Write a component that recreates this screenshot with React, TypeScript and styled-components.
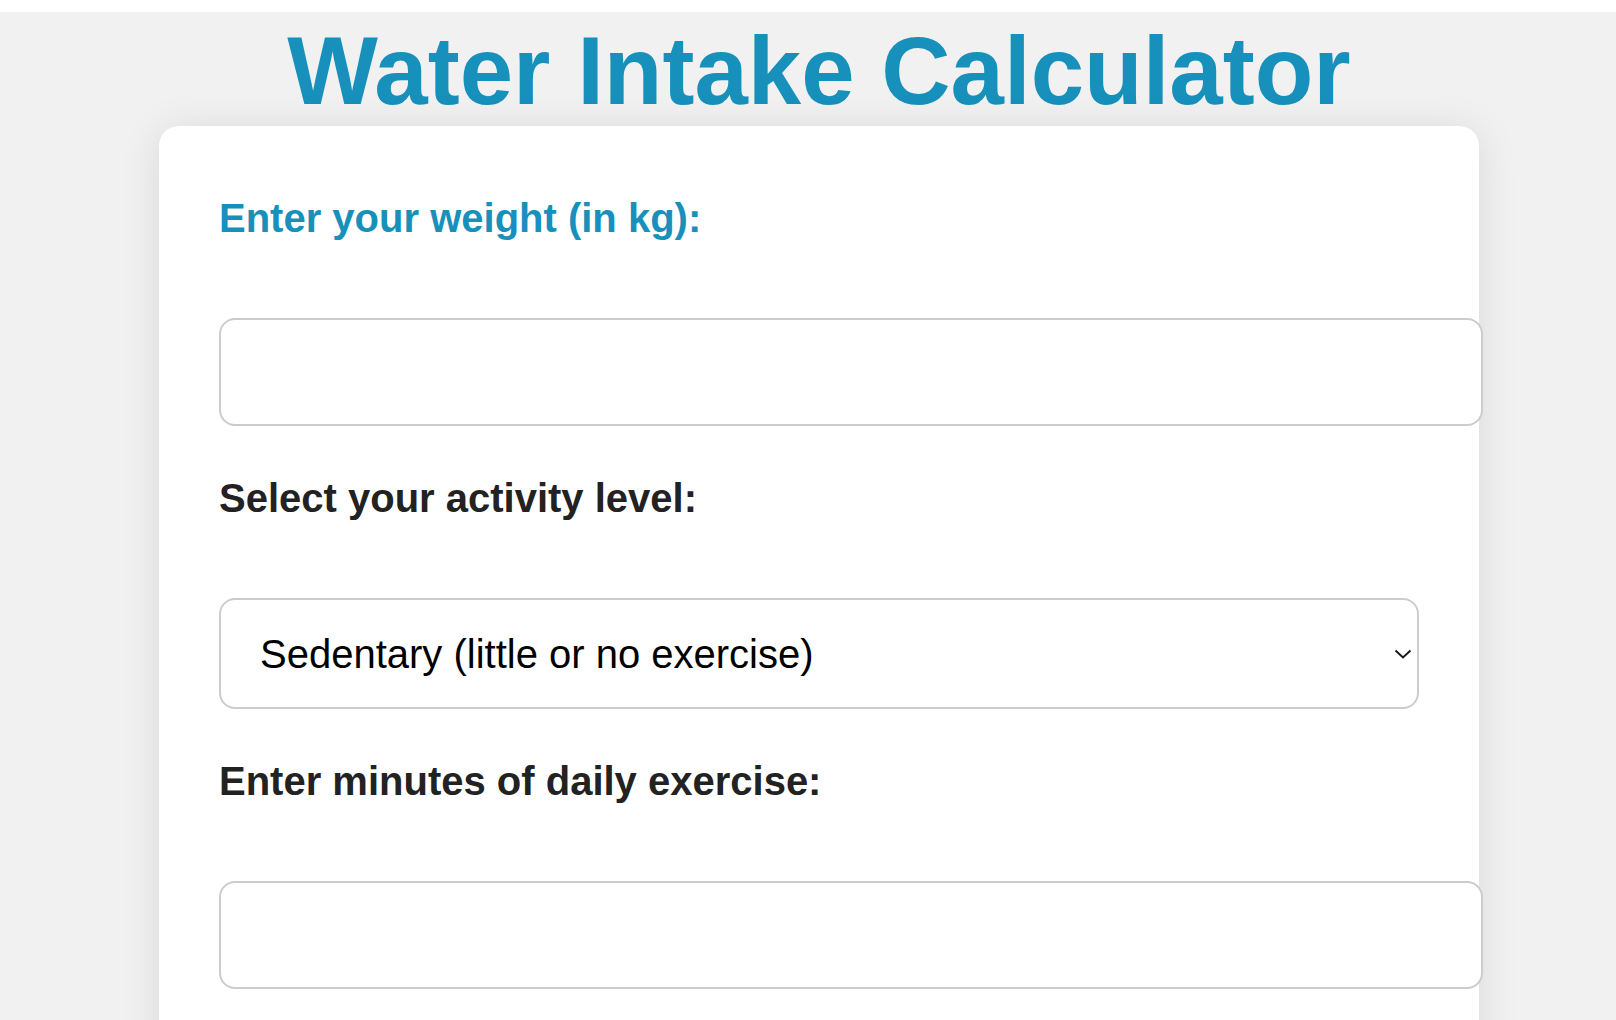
import React from 'react';
import styled, { createGlobalStyle } from 'styled-components';

const GlobalStyle = createGlobalStyle`
	html,
	body {
		margin: 0;
		padding: 0;
		background: #ffffff;
	}
	body {
		font-family: 'Liberation Sans', Arial, Helvetica, sans-serif;
	}
`;

const Page = styled.div`
	display: flex;
	flex-direction: column;
	align-items: center;
	margin-top: 12px;
	padding: 4px 0 0 22px;
	min-height: 1004px;
	background: #f1f1f1;
`;

const Title = styled.h1`
	margin: 0;
	font-size: 96px;
	font-weight: bold;
	line-height: 110px;
	color: #1890bc;
	text-align: center;
`;

const Card = styled.div`
	box-sizing: border-box;
	width: 1320px;
	padding: 69px 60px 60px;
	background: #ffffff;
	border-radius: 20px;
	box-shadow: 0 4px 40px rgba(0, 0, 0, 0.1);
`;

const Label = styled.label<{ $accent?: boolean }>`
	display: block;
	margin-bottom: 77px;
	font-size: 40px;
	font-weight: bold;
	line-height: 46px;
	color: ${(p) => (p.$accent ? '#1890bc' : '#222222')};
`;

const TextInput = styled.input`
	display: block;
	width: 100%;
	height: 104px;
	padding: 0 30px;
	margin: 0 0 49px;
	border: 2px solid #cccccc;
	border-radius: 16px;
	font-family: inherit;
	font-size: 40px;
	color: #000000;
	background: #ffffff;
	outline: none;
`;

const SelectWrap = styled.div`
	position: relative;
	margin-bottom: 49px;
`;

const Select = styled.select`
	display: block;
	box-sizing: border-box;
	width: 100%;
	height: 111px;
	padding: 0 40px 0 39px;
	border: 2px solid #cccccc;
	border-radius: 16px;
	font-family: inherit;
	font-size: 40px;
	color: #000000;
	background: #ffffff;
	appearance: none;
	-webkit-appearance: none;
	outline: none;
`;

const Chevron = styled.svg`
	position: absolute;
	right: 7px;
	top: 50%;
	transform: translateY(-50%);
	pointer-events: none;
`;

export default function App() {
	return (
		<>
			<GlobalStyle />
			<Page>
				<Title>Water Intake Calculator</Title>
				<Card>
					<Label $accent htmlFor="weight">
						Enter your weight (in kg):
					</Label>
					<TextInput id="weight" type="number" />

					<Label htmlFor="activity">Select your activity level:</Label>
					<SelectWrap>
						<Select id="activity" defaultValue="sedentary">
							<option value="sedentary">Sedentary (little or no exercise)</option>
							<option value="light">Lightly active</option>
							<option value="moderate">Moderately active</option>
							<option value="very">Very active</option>
						</Select>
						<Chevron width="18" height="10" viewBox="0 0 18 10">
							<polyline points="1.5,1.5 9,8.5 16.5,1.5" fill="none" stroke="#1a1a1a" strokeWidth="2" />
						</Chevron>
					</SelectWrap>

					<Label htmlFor="exercise">Enter minutes of daily exercise:</Label>
					<TextInput id="exercise" type="number" />
				</Card>
			</Page>
		</>
	);
}
